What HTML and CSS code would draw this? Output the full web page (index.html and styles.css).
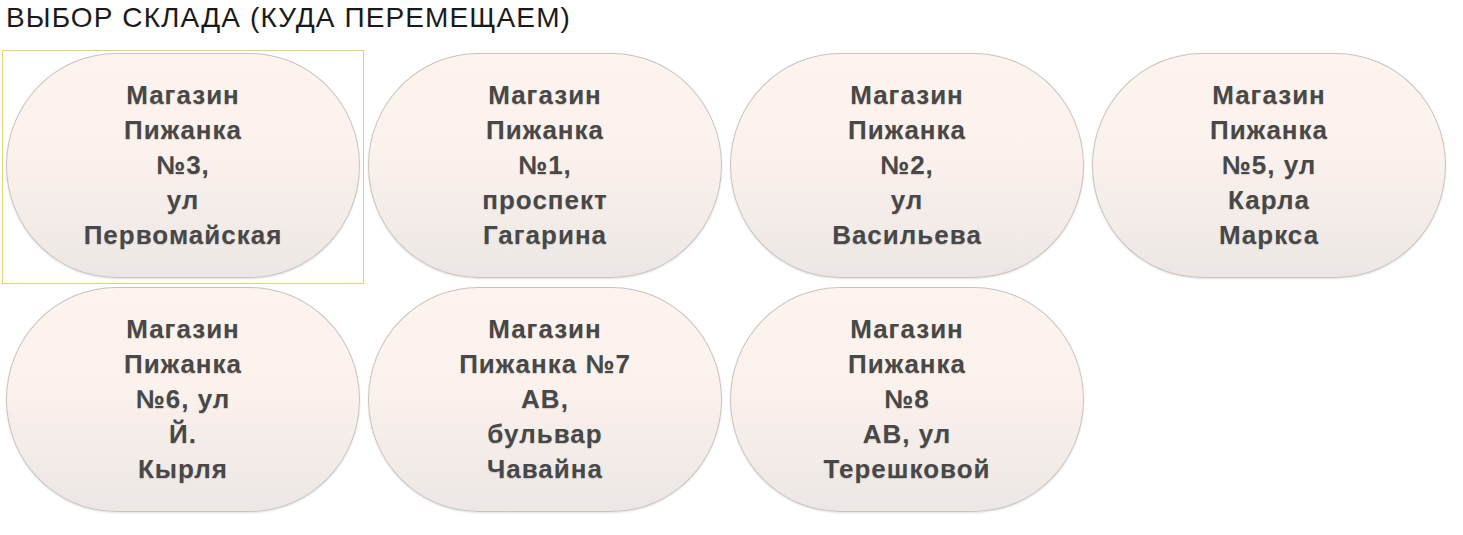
FILE: index.html
```html
<!DOCTYPE html>
<html>
<head>
  <title>Выбор склада</title>
  <link rel="stylesheet" href="styles.css">
</head>
<body>
  <h1 class="title">ВЫБОР СКЛАДА (КУДА ПЕРЕМЕЩАЕМ)</h1>

  <div class="stores">
    <div class="store selected">
      <div class="pill">Магазин<br>Пижанка<br>№3,<br>ул<br>Первомайская</div>
    </div>
    <div class="store">
      <div class="pill">Магазин<br>Пижанка<br>№1,<br>проспект<br>Гагарина</div>
    </div>
    <div class="store">
      <div class="pill">Магазин<br>Пижанка<br>№2,<br>ул<br>Васильева</div>
    </div>
    <div class="store">
      <div class="pill">Магазин<br>Пижанка<br>№5, ул<br>Карла<br>Маркса</div>
    </div>
    <div class="store">
      <div class="pill">Магазин<br>Пижанка<br>№6, ул<br>Й.<br>Кырля</div>
    </div>
    <div class="store">
      <div class="pill">Магазин<br>Пижанка №7<br>АВ,<br>бульвар<br>Чавайна</div>
    </div>
    <div class="store">
      <div class="pill">Магазин<br>Пижанка<br>№8<br>АВ, ул<br>Терешковой</div>
    </div>
  </div>
</body>
</html>
```

FILE: styles.css
```css
body {
  margin: 0;
  padding: 0 2px;
  font-family: "Liberation Sans", Arial, sans-serif;
  background-color: #fff;
  color: #1a1a1a;
}

.title {
  margin: 0;
  padding: 2px 0 0 4px;
  height: 50px;
  box-sizing: border-box;
  font-size: 28px;
  font-weight: normal;
  line-height: 32px;
  letter-spacing: 1.1px;
}

.stores {
  display: grid;
  grid-template-columns: repeat(4, 362px);
}

.store {
  height: 234px;
  box-sizing: border-box;
  padding: 2px 3px 6px;
  border: 1px solid transparent;
  cursor: pointer;
}

.store.selected {
  border-color: #e2d46e;
}

.pill {
  height: 225px;
  box-sizing: border-box;
  display: flex;
  align-items: center;
  justify-content: center;
  text-align: center;
  border: 1px solid #c9c3c0;
  border-radius: 110px / 50%;
  background: linear-gradient(to bottom, #fdf4f0 0%, #fbf1ed 45%, #ece7e5 100%);
  box-shadow: 0 1px 2px rgba(0, 0, 0, 0.12);
  font-size: 26px;
  font-weight: bold;
  line-height: 35px;
  letter-spacing: 1px;
  color: #484848;
  text-shadow: 0 1px 1px rgba(0, 0, 0, 0.15);
}
```
